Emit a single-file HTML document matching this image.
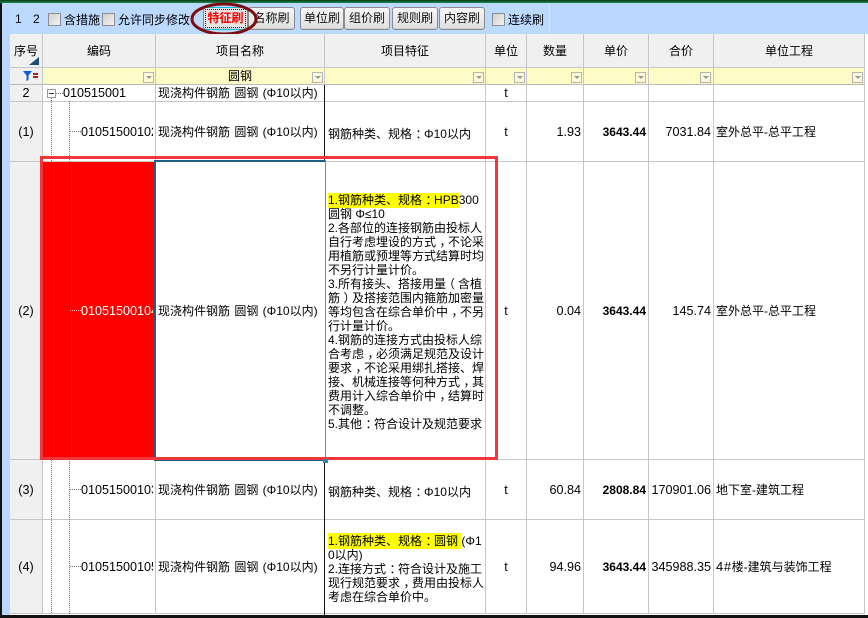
<!DOCTYPE html>
<html lang="zh"><head><meta charset="utf-8"><title>特征刷</title>
<style>
html,body{margin:0;padding:0;background:#fff}
#p{position:relative;width:868px;height:618px;overflow:hidden;background:#fff;font:12px/14px "Liberation Sans","Noto Sans CJK SC",sans-serif;color:#000}
#p div{position:absolute;box-sizing:border-box}
.t{white-space:nowrap;line-height:14px}
.n{font-size:12.6px}
.c{text-align:center}
.r{text-align:right}
.w{word-spacing:1px}
.vl{width:1px;background:#c6c6c6}
.hl{height:1px;background:#c6c6c6}
.b{top:7px;height:23px;background:linear-gradient(#f6f6f6,#e0e0e0);border:1px solid #8b8b8b;border-radius:3px;text-align:center;line-height:21px;white-space:nowrap;font-size:12px;color:#111;box-shadow:inset 0 -1px 0 #cfcfcf}
.cb{width:13px;height:13px;top:13px;background:linear-gradient(135deg,#cfcfcf,#f4f4f4);border:1px solid #8e8e8e}
.dd{top:72px;width:11px;height:11px;background:#fbf9d8;border:1px solid #b5b5b5}
.dd:after{content:"";position:absolute;left:2px;top:3px;border:3px solid transparent;border-top:3px solid #999}
.dv{width:1px;background-image:linear-gradient(#777 50%,transparent 50%);background-size:1px 2px}
.dh{height:1px;background-image:linear-gradient(90deg,#777 50%,transparent 50%);background-size:2px 1px}
mark{background:#ff0;color:inherit;padding:1px 0 1px}
i{font-style:normal;position:relative;left:3.5px}
i.l{left:-3px}
</style></head><body><div id="p">

<div style="left:0;top:0;width:868px;height:3px;background:linear-gradient(#0a3a1a,#1f8a4a)"></div>
<div style="left:0;top:3px;width:868px;height:31px;background:#bad8fe"></div>
<div style="left:0;top:3px;width:2px;height:615px;background:#111"></div>
<div style="left:2px;top:3px;width:8px;height:612px;background:#bad8fe"></div>
<div style="left:10px;top:4px;width:540px;height:29px;background:#bcd9ff;border-right:1px solid #d4e5fb"></div>

<div class="t" style="left:15px;top:12px">1</div>
<div class="t" style="left:33px;top:12px">2</div>
<div class="cb" style="left:48px"></div>
<div class="t" style="left:64px;top:13px">含措施</div>
<div class="cb" style="left:102px"></div>
<div class="t" style="left:118px;top:13px">允许同步修改</div>
<div class="b" style="left:248px;width:47px;">名称刷</div>
<div class="b" style="left:300px;width:44px;">单位刷</div>
<div class="b" style="left:344px;width:46px;">组价刷</div>
<div class="b" style="left:392px;width:46px;">规则刷</div>
<div class="b" style="left:439px;width:46px;">内容刷</div>
<div class="cb" style="left:492px"></div>
<div class="t" style="left:508px;top:13px">连续刷</div>
<div class="b" style="left:203px;width:45px;background:#e4e4e4;border:1px solid #18b8d8;color:#f00;font-weight:bold;outline:1px dotted #222;outline-offset:-3px">特征刷</div>
<svg style="position:absolute;left:190px;top:1px" width="72" height="36"><ellipse cx="34" cy="18" rx="32" ry="15" fill="none" stroke="#7a0c12" stroke-width="3"/></svg>

<div style="left:10px;top:34px;width:855px;height:33px;background:#f0f0f0"></div>
<div style="left:10px;top:67px;width:32px;height:547px;background:#f0f0f0"></div>
<div style="left:42px;top:68px;width:823px;height:16px;background:#fdfbc6"></div>
<div class="hl" style="left:10px;top:67px;width:855px"></div>
<div class="hl" style="left:10px;top:84px;width:855px;background:#b9b9b9"></div>
<div class="hl" style="left:10px;top:101px;width:855px"></div>
<div class="hl" style="left:10px;top:161px;width:855px"></div>
<div class="hl" style="left:10px;top:459px;width:855px"></div>
<div class="hl" style="left:10px;top:519px;width:855px"></div>
<div class="hl" style="left:10px;top:613px;width:855px"></div>

<div class="vl" style="left:42px;top:34px;height:580px"></div>
<div class="vl" style="left:155px;top:34px;height:580px"></div>
<div class="vl" style="left:324px;top:34px;height:51px"></div>
<div style="left:324px;top:85px;width:1px;height:530px;background:#111"></div>
<div class="vl" style="left:485px;top:34px;height:580px"></div>
<div class="vl" style="left:526px;top:34px;height:580px"></div>
<div class="vl" style="left:583px;top:34px;height:580px"></div>
<div class="vl" style="left:648px;top:34px;height:580px"></div>
<div class="vl" style="left:713px;top:34px;height:580px"></div>
<div class="vl" style="left:864px;top:34px;height:580px"></div>

<div class="t c" style="left:10px;top:44px;width:32px">序号</div>
<div class="t c" style="left:43px;top:44px;width:112px">编码</div>
<div class="t c" style="left:156px;top:44px;width:168px">项目名称</div>
<div class="t c" style="left:325px;top:44px;width:160px">项目特征</div>
<div class="t c" style="left:486px;top:44px;width:40px">单位</div>
<div class="t c" style="left:527px;top:44px;width:56px">数量</div>
<div class="t c" style="left:584px;top:44px;width:64px">单价</div>
<div class="t c" style="left:649px;top:44px;width:64px">合价</div>
<div class="t c" style="left:714px;top:44px;width:150px">单位工程</div>
<svg style="position:absolute;left:29px;top:57px" width="11" height="9"><path d="M10 0V8H0Z" fill="#1f4f78"/></svg>

<svg style="position:absolute;left:22px;top:70px" width="17" height="12"><path d="M1 1H10L6.5 5.5V10L4.5 11V5.5Z" fill="#0a5fd8"/><path d="M11 4H16M11 7H16" stroke="#b02020" stroke-width="2"/></svg>
<div class="t c" style="left:156px;top:69px;width:168px">圆钢</div>
<div class="dd" style="left:143px"></div>
<div class="dd" style="left:312px"></div>
<div class="dd" style="left:473px"></div>
<div class="dd" style="left:514px"></div>
<div class="dd" style="left:571px"></div>
<div class="dd" style="left:635px"></div>
<div class="dd" style="left:700px"></div>
<div class="dd" style="left:852px"></div>

<div class="dv" style="left:51px;top:98px;height:516px"></div>
<div class="dv" style="left:69px;top:101px;height:513px"></div>
<div style="left:47px;top:89px;width:9px;height:9px;background:#fff;border:1px solid #999"></div>
<div style="left:49px;top:93px;width:5px;height:1px;background:#333"></div>
<div class="dh" style="left:56px;top:93px;width:7px"></div>
<div class="dh" style="left:70px;top:131px;width:11px"></div>
<div class="dh" style="left:70px;top:489px;width:11px"></div>
<div class="dh" style="left:70px;top:566px;width:11px"></div>

<div class="t c n" style="left:10px;top:86px;width:32px">2</div>
<div class="t n" style="left:63px;top:86px">010515001</div>
<div class="t w" style="left:158px;top:86px">现浇构件钢筋 圆钢 (Φ10以内)</div>
<div class="t c n" style="left:486px;top:86px;width:40px">t</div>

<div class="t c n" style="left:10px;top:125px;width:32px">(1)</div>
<div class="t n" style="left:81px;top:125px;width:72px;overflow:hidden">01051500102</div>
<div class="t w" style="left:158px;top:125px">现浇构件钢筋 圆钢 (Φ10以内)</div>
<div class="t" style="left:328px;top:127px">钢筋种类、规格<i>：</i>Φ10以内</div>
<div class="t c n" style="left:486px;top:125px;width:40px">t</div>
<div class="t r n" style="left:527px;top:125px;width:54px">1.93</div>
<div class="t r n" style="left:584px;top:125px;width:62px;font-weight:bold;font-size:12px">3643.44</div>
<div class="t r n" style="left:649px;top:125px;width:62px">7031.84</div>
<div class="t" style="left:716px;top:125px">室外总平-总平工程</div>

<div style="left:43px;top:162px;width:112px;height:297px;background:#f00"></div>
<div class="dv" style="left:51px;top:162px;height:297px;background-image:linear-gradient(#a00 50%,transparent 50%)"></div>
<div class="dv" style="left:69px;top:162px;height:297px;background-image:linear-gradient(#a00 50%,transparent 50%)"></div>
<div class="dh" style="left:70px;top:310px;width:11px;background-image:linear-gradient(90deg,#fbb 50%,transparent 50%)"></div>
<div style="left:154px;top:160px;width:172px;height:301px;border:2px solid #1f5f7f;border-right:0;background:#fff"></div>
<div style="left:325px;top:160px;width:1px;height:301px;background:#c8703a"></div>
<div class="t c n" style="left:10px;top:304px;width:32px">(2)</div>
<div class="t n" style="left:81px;top:304px;width:72px;overflow:hidden;color:#fff">01051500104</div>
<div class="t w" style="left:158px;top:304px">现浇构件钢筋 圆钢 (Φ10以内)</div>
<div class="t c n" style="left:486px;top:304px;width:40px">t</div>
<div class="t r n" style="left:527px;top:304px;width:54px">0.04</div>
<div class="t r" style="left:584px;top:304px;width:62px;font-weight:bold">3643.44</div>
<div class="t r n" style="left:649px;top:304px;width:62px">145.74</div>
<div class="t" style="left:716px;top:304px">室外总平-总平工程</div>

<div class="t" style="left:328px;top:193px;width:157px;height:240px;overflow:hidden">
<mark>1.钢筋种类、规格<i>：</i>HPB</mark>300<br>圆钢 Φ≤10<br>2.各部位的连接钢筋由投标人<br>自行考虑埋设的方式<i>，</i>不论采<br>用植筋或预埋等方式结算时均<br>不另行计量计价。<br>3.所有接头、搭接用量<i class="l">（</i>含植<br>筋<i>）</i>及搭接范围内箍筋加密量<br>等均包含在综合单价中<i>，</i>不另<br>行计量计价。<br>4.钢筋的连接方式由投标人综<br>合考虑<i>，</i>必须满足规范及设计<br>要求<i>，</i>不论采用绑扎搭接、焊<br>接、机械连接等何种方式<i>，</i>其<br>费用计入综合单价中<i>，</i>结算时<br>不调整。<br>5.其他<i>：</i>符合设计及规范要求
</div>

<div class="t c n" style="left:10px;top:483px;width:32px">(3)</div>
<div class="t n" style="left:81px;top:483px;width:72px;overflow:hidden">01051500103</div>
<div class="t w" style="left:158px;top:483px">现浇构件钢筋 圆钢 (Φ10以内)</div>
<div class="t" style="left:328px;top:485px">钢筋种类、规格<i>：</i>Φ10以内</div>
<div class="t c n" style="left:486px;top:483px;width:40px">t</div>
<div class="t r n" style="left:527px;top:483px;width:54px">60.84</div>
<div class="t r" style="left:584px;top:483px;width:62px;font-weight:bold">2808.84</div>
<div class="t r n" style="left:649px;top:483px;width:62px">170901.06</div>
<div class="t" style="left:716px;top:483px">地下室-建筑工程</div>

<div class="t c n" style="left:10px;top:560px;width:32px">(4)</div>
<div class="t n" style="left:81px;top:560px;width:72px;overflow:hidden">01051500105</div>
<div class="t w" style="left:158px;top:560px">现浇构件钢筋 圆钢 (Φ10以内)</div>
<div class="t" style="left:328px;top:534px"><mark>1.钢筋种类、规格<i>：</i>圆钢 </mark>(Φ1<br>0以内)<br>2.连接方式<i>：</i>符合设计及施工<br>现行规范要求<i>，</i>费用由投标人<br>考虑在综合单价中。</div>
<div class="t c n" style="left:486px;top:560px;width:40px">t</div>
<div class="t r n" style="left:527px;top:560px;width:54px">94.96</div>
<div class="t r" style="left:584px;top:560px;width:62px;font-weight:bold">3643.44</div>
<div class="t r n" style="left:649px;top:560px;width:62px">345988.35</div>
<div class="t" style="left:716px;top:560px"><span style="font-size:13px;letter-spacing:.6px">4#</span>楼-建筑与装饰工程</div>

<div style="left:40px;top:156px;width:458px;height:304px;border:3px solid #f0373c"></div>
<div style="left:323px;top:459px;width:5px;height:4px;background:#3a80b8"></div>
<div style="left:0;top:615px;width:868px;height:3px;background:#111"></div>
</div></body></html>
